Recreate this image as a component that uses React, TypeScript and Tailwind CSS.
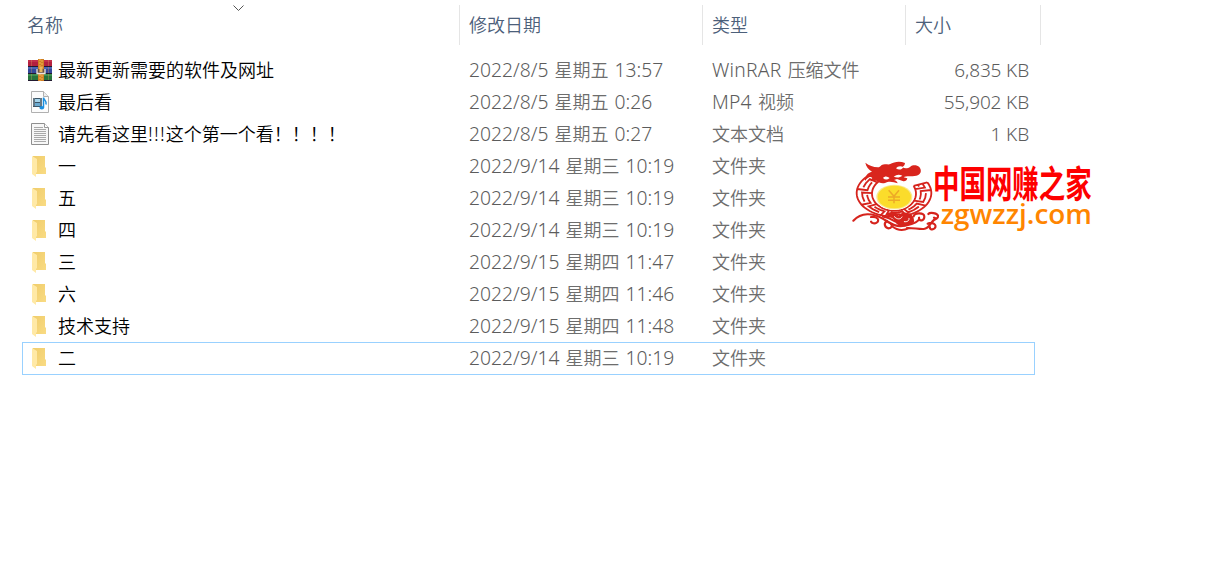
import React from "react";

type Kind = "rar" | "mp4" | "txt" | "folder";

interface Entry {
  name: string;
  date: string;
  type: string;
  size?: string;
  kind: Kind;
  focused?: boolean;
}

const entries: Entry[] = [
  { name: "最新更新需要的软件及网址", date: "2022/8/5 星期五 13:57", type: "WinRAR 压缩文件", size: "6,835 KB", kind: "rar" },
  { name: "最后看", date: "2022/8/5 星期五 0:26", type: "MP4 视频", size: "55,902 KB", kind: "mp4" },
  { name: "请先看这里!!!这个第一个看！！！！", date: "2022/8/5 星期五 0:27", type: "文本文档", size: "1 KB", kind: "txt" },
  { name: "一", date: "2022/9/14 星期三 10:19", type: "文件夹", kind: "folder" },
  { name: "五", date: "2022/9/14 星期三 10:19", type: "文件夹", kind: "folder" },
  { name: "四", date: "2022/9/14 星期三 10:19", type: "文件夹", kind: "folder" },
  { name: "三", date: "2022/9/15 星期四 11:47", type: "文件夹", kind: "folder" },
  { name: "六", date: "2022/9/15 星期四 11:46", type: "文件夹", kind: "folder" },
  { name: "技术支持", date: "2022/9/15 星期四 11:48", type: "文件夹", kind: "folder" },
  { name: "二", date: "2022/9/14 星期三 10:19", type: "文件夹", kind: "folder", focused: true },
];

/* Latin runs are set slightly larger than the Chinese characters beside them. */
function Mixed({ text, latin = "text-[19.3px] text-[#5c5c5c]" }: { text: string; latin?: string }) {
  return (
    <>
      {text.split(/([\x20-\x7e]+)/).map((part, i) =>
        i % 2 ? (
          <span key={i} className={latin}>{part}</span>
        ) : (
          part
        ),
      )}
    </>
  );
}

function RarIcon() {
  return (
    <svg viewBox="0 0 24 22" className="h-[22px] w-6">
      <rect x="0" y="1" width="24" height="6.5" fill="#b3203f" />
      <rect x="0" y="1" width="24" height="2" fill="#c22f4c" />
      <rect x="0" y="8" width="24" height="6.5" fill="#34489a" />
      <rect x="0" y="8" width="24" height="2" fill="#4a66b6" />
      <rect x="0" y="15" width="24" height="6.5" fill="#27733c" />
      <rect x="0" y="15" width="24" height="2" fill="#3d9050" />
      <path d="M3.500 1v6M3.500 8v6M3.500 15v6M20.500 1v6M20.500 8v6M20.500 15v6" stroke="#d8a65a" strokeOpacity=".35" />
      <path d="M0 7.500h24M0 14.500h24M0 21.500h24" stroke="#221a30" />
      <path d="M10 0h6v22h-6z" fill="#d07f24" />
      <path d="M12 0v22M14 1v20" stroke="#f4b550" strokeDasharray="2 1" />
      <path d="M9 10v4.500h8V10" fill="#6d5340" stroke="#e8e4e0" strokeWidth="1.300" />
      <path d="M11.500 8h3v5h-3z" fill="#e8b860" />
    </svg>
  );
}

function VideoIcon() {
  return (
    <svg viewBox="0 0 18 22" className="h-[22px] w-[18px]">
      <path d="M.5 .5h12l5 5v16H.5z" fill="#fcfcfc" stroke="#b0b0b0" />
      <path d="M12.500 .5v5h5" fill="#eee" stroke="#b0b0b0" />
      <rect x="2" y="7" width="9" height="9" fill="#3d5566" />
      <rect x="4" y="8" width="5" height="3" fill="#a4d3ea" />
      <rect x="4" y="12" width="5" height="3" fill="#6aa9cf" />
      <path d="M3 7.500v8M10 7.500v8" stroke="#e4e4e4" strokeDasharray="1 1" />
      <path d="M11.500 6v12h-2" fill="none" stroke="#fcfcfc" />
      <path d="M12.500 7v9.500M12.500 6.500c.5 3 3.500 3 2.500 7" fill="none" stroke="#1a8fe0" strokeWidth="1.500" />
      <ellipse cx="10.800" cy="16.700" rx="2.400" ry="1.800" fill="#1a8fe0" />
    </svg>
  );
}

function TextIcon() {
  return (
    <svg viewBox="0 0 18 22" className="h-[22px] w-[18px]">
      <path d="M.5 .5h13l4 4v17H.5z" fill="#f7f7f7" stroke="#8f8f8f" />
      <path d="M13.500 .5v4h4" fill="#fff" stroke="#999" />
      <path d="M3 4.500h9M3 6.500h12M3 8.500h12M3 10.500h12M3 12.500h12M3 14.500h12M3 16.500h12M3 18.500h12" stroke="#a9a9a9" />
    </svg>
  );
}

function FolderIcon() {
  return (
    <svg viewBox="0 0 15 22" className="h-[22px] w-[15px]">
      <defs>
        <linearGradient id="folderBack" x2="1" y2="1">
          <stop stopColor="#f0cd6c" />
          <stop offset="1" stopColor="#f9db83" />
        </linearGradient>
      </defs>
      <path d="M1 1h12v11l1 1v6H1z" fill="url(#folderBack)" />
      <path d="M0 1l5 3v13l-1 1v4L0 19z" fill="#ffe9a6" />
    </svg>
  );
}

const icons: Record<Kind, React.ReactNode> = {
  rar: <RarIcon />,
  mp4: <VideoIcon />,
  txt: <TextIcon />,
  folder: <FolderIcon />,
};

/* Fretwork ring: (u, v) runs along the ring in cells and across it from rim to centre. */
const CELLS = 13;

function ringPoint(u: number, v: number) {
  const a = ((-27 + (256 * u) / CELLS) * Math.PI) / 180;
  const x = 147 + (112 - 46 * v) * Math.cos(a);
  const y = 129 + 2 * v + (71 - 20 * v) * Math.sin(a);
  return `${x.toFixed(1)} ${y.toFixed(1)}`;
}

function ringLine(points: number[][]) {
  return "M" + points.map(([u, v]) => ringPoint(u, v)).join("L");
}

function ringPath() {
  const arc = (v: number) =>
    ringLine(Array.from({ length: CELLS * 4 + 1 }, (_, i) => [i / 4, v]));
  const parts = [arc(0), arc(1), ringLine([[0, 0], [0, 1]]), ringLine([[CELLS, 0], [CELLS, 1]])];
  for (let i = 0; i < CELLS; i++) {
    if (i % 2) {
      parts.push(ringLine([[i, 0], [i, 0.68], [i + 0.5, 0.68], [i + 1, 0.68]]));
      parts.push(ringLine([[i + 0.35, 0.35], [i + 1, 0.35]]));
    } else {
      parts.push(ringLine([[i, 0.35], [i + 0.6, 0.35], [i + 0.6, 1]]));
      parts.push(ringLine([[i, 0.68], [i + 0.3, 0.68]]));
    }
  }
  return parts.join("");
}

function Brand() {
  return (
    <svg viewBox="0 0 765 270" className="absolute left-[845px] top-[150px] h-[90px] w-[255px] overflow-visible">
      <path d={ringPath()} fill="none" stroke="#d6241d" strokeWidth="5.500" />
      <ellipse cx="148" cy="141" rx="56" ry="39" fill="#fff" />
      <ellipse cx="148" cy="141" rx="54" ry="37" fill="#fae98b" />
      <ellipse cx="148" cy="141" rx="50" ry="34" fill="#fbdc2b" />
      <path d="M131 121l16 18 15-18M147 139v21M129 141h36M129 151h36" fill="none" stroke="#eda927" strokeWidth="4.500" />
      <path
        d="M61 38c12 9 23 13 38 14 3 0 7-3 11-7 8-5 16-1 24-2 15-8 30-10 46-4 0 6-4 10-8 12 7 6 16 5 24-1 6-5 19-6 27 1 9 11 4 24-9 26-15 3-31-1-38 5l11 3c-1 7-8 10-14 8l-17-6-9 3c6 1 10 5 11 10-12-4-26-8-38-1-11 2-20-1-25-7l-20 2 9-13c-11-2-18 4-24 12-1-15 8-25 21-28-10-6-18-15-20-27z"
        fill="#d9251d"
      />
      <path d="M153 55c5-7 15-8 22-3-5 8-14 9-22 3zM114 84c5-6 13-6 20 0-7 6-14 6-20 0zM146 80c9-7 16-8 26-3-8 6-16 7-26 3z" fill="#fff" />
      <path d="M120 196c12-14 34-12 41 1 7-10 19-12 30-7 12 4 17 14 16 26-14 14-36 17-52 6-5-14-18-22-35-26z" fill="#d6241d" />
      <path
        d="M25 212c24-25 58-24 88-6 22 13 38 27 67 21 26-4 45-14 42-24"
        fill="none"
        stroke="#d6241d"
        strokeWidth="6.500"
        strokeLinecap="round"
      />
      <path d="M78 201c20-3 27 11 17 17-6 4-15 2-17-3M114 200c20 0 31 18 56 20M126 213c-12 7-6 21 5 22 9 0 12-9 7-13M206 199c2-12 32-12 32 1 0 12-12 13-14 9M250 192c5-6 28-3 29 6 1 7-7 9-12 5M276 205c-20 4-18 30-40 32-15 1-32-4-50-3M248 221c14-7 30 4 21 14-6 6-16 3-14-3M140 228c15 12 34 15 50 7" fill="none" stroke="#d6241d" strokeWidth="6.500" strokeLinecap="round" />
      <path d="M148 200c8 9 19 9 23 1M178 215c9 2 16-4 14-10" fill="none" stroke="#fff" strokeWidth="3" strokeLinecap="round" />
      <text transform="scale(1 1.420)" x="264" y="100.500" textLength="476" lengthAdjust="spacingAndGlyphs" className="fill-[#fe0000] font-['Noto_Sans_CJK_SC',sans-serif] text-[79px] font-bold">中国网赚之家</text>
      <text x="287" y="222" textLength="454" lengthAdjust="spacingAndGlyphs" className="fill-[#ff8500] font-['Open_Sans',sans-serif] text-[80px] font-semibold">zgwzzj.com</text>
    </svg>
  );
}

export default function App() {
  return (
    <main className="relative h-[588px] w-[1205px] overflow-hidden bg-white font-['Noto_Sans','Noto_Sans_CJK_SC',sans-serif] text-[18px] font-[350]">
      <header className="flex h-[45px] pt-[5px] leading-[41px] text-[#4c607a]">
        <div className="w-[460px] border-r border-[#e5e5e5] pl-[27px]">名称</div>
        <div className="w-[243px] border-r border-[#e5e5e5] pl-[9px]">修改日期</div>
        <div className="w-[203px] border-r border-[#e5e5e5] pl-[9px]">类型</div>
        <div className="w-[135px] border-r border-[#e5e5e5] pl-[9px]">大小</div>
      </header>
      <svg viewBox="0 0 12 7" className="absolute left-[233px] top-[5px] h-[7px] w-3">
        <path d="M.5 .5l5 5 5-5" fill="none" stroke="#555" />
      </svg>
      <section className="ml-[22px] mt-[9px] w-[1013px]">
        {entries.map((e) => (
          <div
            key={e.name}
            className={`flex items-center whitespace-nowrap border leading-[30px] text-[#6d6d6d] ${
              e.focused ? "h-[33px] border-[#99d1ff] pb-px" : "h-8 border-transparent"
            }`}
          >
            <div className="flex w-[35px] justify-center pr-0.5">{icons[e.kind]}</div>
            <div className="w-[411px] text-black"><Mixed text={e.name} latin="text-[19.3px] tracking-[1.2px]" /></div>
            <div className="w-[243px] [word-spacing:1px]"><Mixed text={e.date} /></div>
            <div className="w-[180px]"><Mixed text={e.type} latin="text-[19.3px] text-[#5c5c5c] tracking-[0.2px] [word-spacing:1px]" /></div>
            <div className="w-[137px] text-right"><Mixed text={e.size ?? ""} latin="text-[19px] text-[#5c5c5c] tracking-[-0.15px]" /></div>
          </div>
        ))}
      </section>
      <Brand />
    </main>
  );
}
